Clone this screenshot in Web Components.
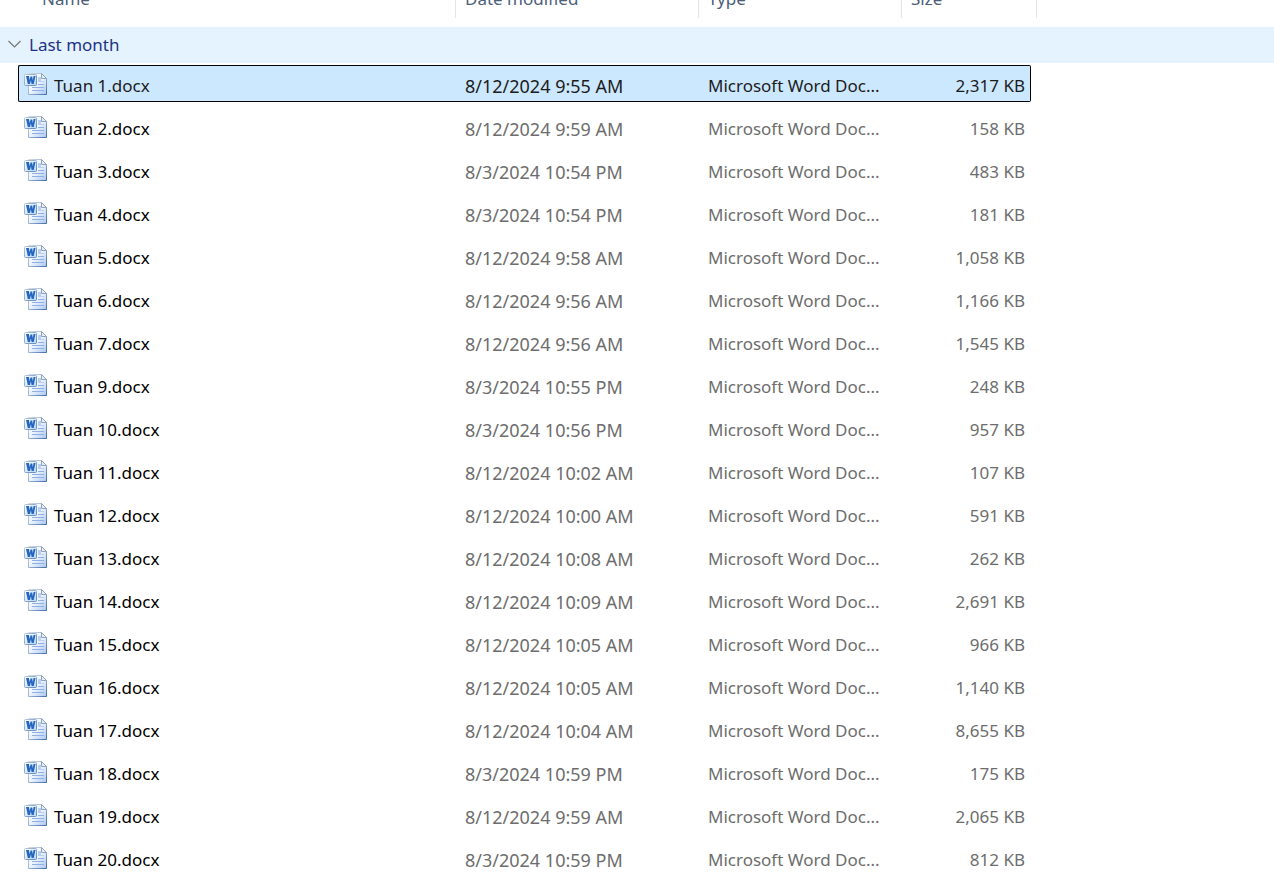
<!DOCTYPE html>
<html lang="en">
<head>
<meta charset="utf-8">
<title>File list</title>
<style>
  body { margin: 0; background: #fff; }
</style>
</head>
<body>
<file-list group="Last month"></file-list>

<template id="word-icon-template">
  <style>
    :host { display: block; flex: none; width: 24px; height: 24px; }
    svg { display: block; width: 100%; height: 100%; }
  </style>
  <svg viewBox="0 0 24 24" aria-hidden="true">
    <defs>
      <linearGradient id="sheet" x1="0" y1="0" x2="1" y2="1">
        <stop offset="0" stop-color="#ffffff"/>
        <stop offset=".5" stop-color="#edf4fd"/>
        <stop offset="1" stop-color="#a9c6f0"/>
      </linearGradient>
      <linearGradient id="edge" x1="0" y1="0" x2="1" y2="1">
        <stop offset="0" stop-color="#d3dce8"/>
        <stop offset=".5" stop-color="#9db3d2"/>
        <stop offset="1" stop-color="#456cae"/>
      </linearGradient>
      <linearGradient id="badge" x1="0" y1="0" x2="1" y2="1">
        <stop offset="0" stop-color="#ffffff"/>
        <stop offset="1" stop-color="#b5d6f8"/>
      </linearGradient>
      <linearGradient id="badge-edge" x1="0" y1="0" x2="1" y2="1">
        <stop offset="0" stop-color="#b3c6df"/>
        <stop offset="1" stop-color="#6288be"/>
      </linearGradient>
    </defs>
    <path d="M4.500 1.500H17.500L22.500 6.500V22.500H4.500Z" fill="url(#sheet)" stroke="url(#edge)"/>
    <path d="M17.500 1.500V6.500H22.500Z" fill="#e8eef5" stroke="#8fa2b9"/>
    <rect x="14" y="5" width="3" height="5" fill="#b9d0f0"/>
    <path d="M17 9.500H20" stroke="#b9d0f0"/>
    <path d="M14 12.500H20M8 15.500H20M8 18.500H20" stroke="#8fb0e0"/>
    <rect x=".5" y="2.500" width="12" height="11" rx="1" fill="url(#badge)" stroke="url(#badge-edge)"/>
    <path d="M2 4H5L5.600 8.200L6.500 4.500H8.200L8.800 8.200L9.600 4H11.500L9.700 12H7.600L6.900 8.200L6 12H3.800Z" fill="#2466c2"/>
  </svg>
</template>

<template id="file-cell-template">
  <style>
    :host {
      display: flex; align-items: flex-start; box-sizing: border-box; height: 37px;
      padding: 6px 9px 0; line-height: 24px; white-space: nowrap;
      border: 0 solid transparent; border-width: 1px 0;
    }
    :host([kind="name"]) { margin-left: 18px; padding: 6px 5px 0; border-left-width: 1px; border-radius: 2px 0 0 2px; gap: 6px; }
    :host([kind="date"]) { font-size: 18px; }
    :host([kind="size"]) { margin-right: 6px; padding: 6px 5px 0; border-right-width: 1px; border-radius: 0 2px 2px 0; justify-content: flex-end; }
    :host([selected]) { background: #cce8ff; border-color: #000; }
    span { padding-top: 2px; }
  </style>
  <slot name="icon"></slot><span><slot></slot></span>
</template>

<template id="column-title-template">
  <style>
    :host {
      display: flex; align-items: flex-end; box-sizing: border-box; height: 18px;
      padding: 0 9px 7px; line-height: 24px; color: #4c607a; font-weight: 400;
      border-right: 1px solid #e5e5e5; overflow: hidden;
    }
    :host([first]) { padding-left: 42px; }
  </style>
  <slot></slot>
</template>

<template id="group-title-template">
  <style>
    :host { display: block; background: #e5f3ff; }
    button {
      display: flex; align-items: center; gap: 7px; width: 100%; height: 36px;
      margin: 0; padding: 0 8px; border: 0; background: none;
      font: inherit; font-weight: 400; line-height: 24px; color: #1e3287; text-align: left;
    }
    svg { display: block; width: 14px; height: 8px; margin-bottom: 2px; }
    :host([collapsed]) svg { transform: rotate(-90deg); }
  </style>
  <button type="button" aria-expanded="true">
    <svg viewBox="0 0 14 8" fill="none" stroke="#777" stroke-width="1.200" aria-hidden="true"><path d="M.5 1L6.500 7L12.500 1"/></svg>
    <slot></slot>
  </button>
</template>

<template id="file-list-template">
  <style>
    :host { display: block; font: 17px "Noto Sans", "Open Sans", sans-serif; color: #000; overflow: hidden; }
    table { width: 100%; table-layout: fixed; border-collapse: collapse; }
    th, td { padding: 0; text-align: left; font-weight: 400; }
    thead th { padding-bottom: 9px; }
    .rows td { padding: 2px 0 4px; color: #6d6d6d; }
    .rows td:first-child { color: #000; }
    .rows tr[aria-selected] td { color: #1c1c1c; }
    .name { width: 456px; }
    .date { width: 243px; }
    .type { width: 203px; }
    .size { width: 135px; }
  </style>
  <table>
    <colgroup><col class="name"><col class="date"><col class="type"><col class="size"><col></colgroup>
    <thead>
      <tr>
        <th scope="col"><column-title first>Name</column-title></th>
        <th scope="col"><column-title>Date modified</column-title></th>
        <th scope="col"><column-title>Type</column-title></th>
        <th scope="col"><column-title>Size</column-title></th>
        <td></td>
      </tr>
    </thead>
    <tbody><tr><th colspan="5" scope="rowgroup"><group-title></group-title></th></tr></tbody>
    <tbody class="rows"></tbody>
  </table>
</template>

<script>
  const FILES = [
    ["Tuan 1.docx", "8/12/2024 9:55 AM", "2,317 KB"],
    ["Tuan 2.docx", "8/12/2024 9:59 AM", "158 KB"],
    ["Tuan 3.docx", "8/3/2024 10:54 PM", "483 KB"],
    ["Tuan 4.docx", "8/3/2024 10:54 PM", "181 KB"],
    ["Tuan 5.docx", "8/12/2024 9:58 AM", "1,058 KB"],
    ["Tuan 6.docx", "8/12/2024 9:56 AM", "1,166 KB"],
    ["Tuan 7.docx", "8/12/2024 9:56 AM", "1,545 KB"],
    ["Tuan 9.docx", "8/3/2024 10:55 PM", "248 KB"],
    ["Tuan 10.docx", "8/3/2024 10:56 PM", "957 KB"],
    ["Tuan 11.docx", "8/12/2024 10:02 AM", "107 KB"],
    ["Tuan 12.docx", "8/12/2024 10:00 AM", "591 KB"],
    ["Tuan 13.docx", "8/12/2024 10:08 AM", "262 KB"],
    ["Tuan 14.docx", "8/12/2024 10:09 AM", "2,691 KB"],
    ["Tuan 15.docx", "8/12/2024 10:05 AM", "966 KB"],
    ["Tuan 16.docx", "8/12/2024 10:05 AM", "1,140 KB"],
    ["Tuan 17.docx", "8/12/2024 10:04 AM", "8,655 KB"],
    ["Tuan 18.docx", "8/3/2024 10:59 PM", "175 KB"],
    ["Tuan 19.docx", "8/12/2024 9:59 AM", "2,065 KB"],
    ["Tuan 20.docx", "8/3/2024 10:59 PM", "812 KB"]
  ];

  class TemplateElement extends HTMLElement {
    constructor() {
      super();
      const template = document.getElementById(this.localName + "-template");
      this.attachShadow({ mode: "open" }).append(template.content.cloneNode(true));
    }
  }

  class WordIcon extends TemplateElement {}
  class FileCell extends TemplateElement {}
  class ColumnTitle extends TemplateElement {}

  class GroupTitle extends TemplateElement {
    connectedCallback() {
      const button = this.shadowRoot.querySelector("button");
      button.onclick = () => {
        const collapsed = this.toggleAttribute("collapsed");
        button.setAttribute("aria-expanded", String(!collapsed));
        this.dispatchEvent(new CustomEvent("group-toggle", { detail: collapsed }));
      };
    }
  }

  class FileList extends TemplateElement {
    connectedCallback() {
      const root = this.shadowRoot;
      const title = root.querySelector("group-title");
      const rows = root.querySelector(".rows");
      title.textContent = this.getAttribute("group");
      title.addEventListener("group-toggle", event => { rows.hidden = event.detail; });
      rows.innerHTML = FILES.map(([name, date, size], index) => {
        const selected = index === 0 ? " selected" : "";
        return `<tr${selected && ' aria-selected="true"'}>
          <td><file-cell kind="name"${selected}><word-icon slot="icon"></word-icon>${name}</file-cell></td>
          <td><file-cell kind="date"${selected}>${date}</file-cell></td>
          <td><file-cell${selected}>Microsoft Word Doc...</file-cell></td>
          <td><file-cell kind="size"${selected}>${size}</file-cell></td>
          <td></td>
        </tr>`;
      }).join("");
    }
  }

  customElements.define("word-icon", WordIcon);
  customElements.define("file-cell", FileCell);
  customElements.define("column-title", ColumnTitle);
  customElements.define("group-title", GroupTitle);
  customElements.define("file-list", FileList);
</script>
</body>
</html>
